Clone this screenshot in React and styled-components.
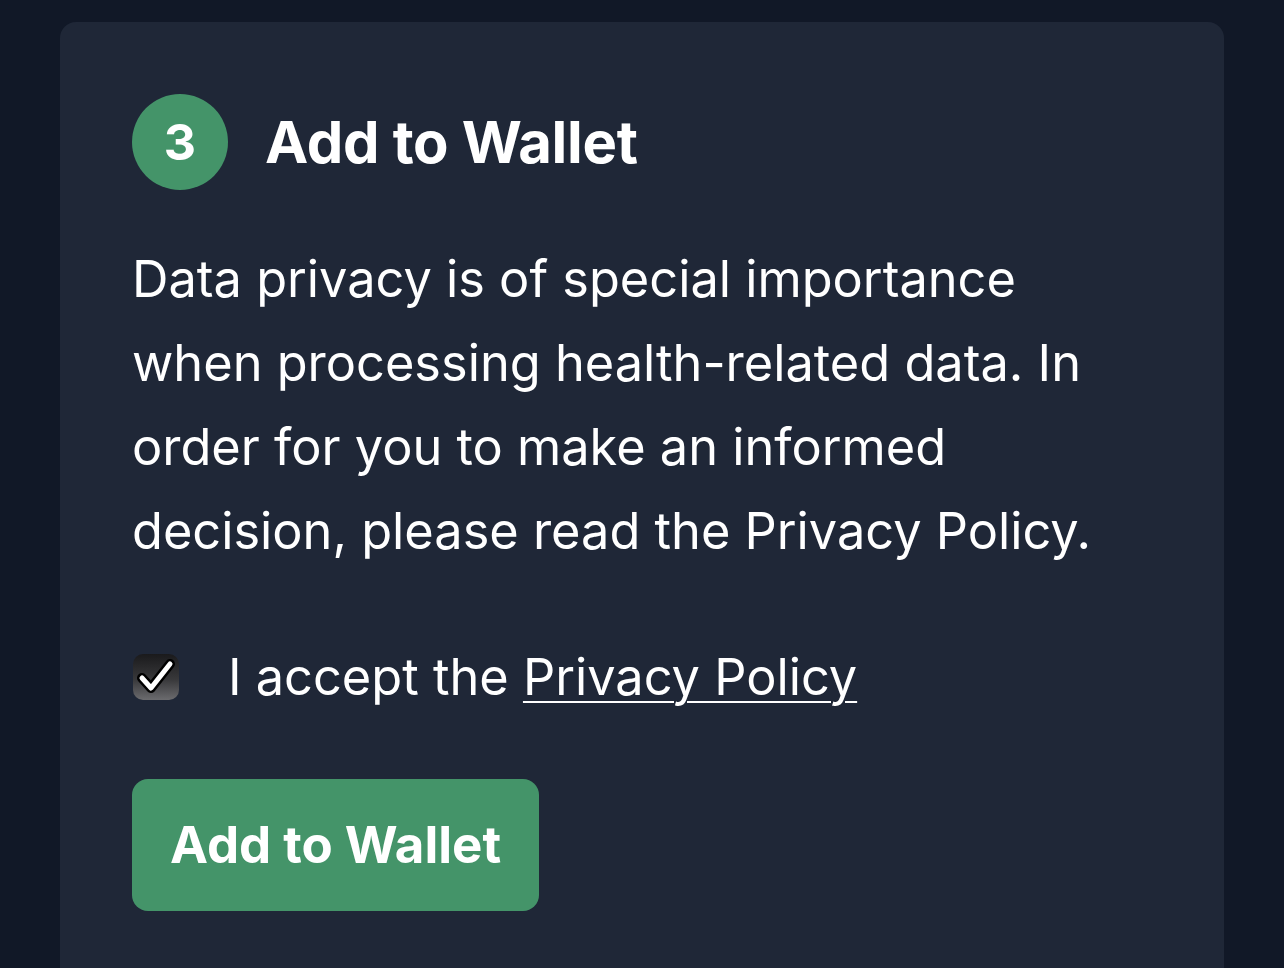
import React, { useState } from 'react';
import styled, { createGlobalStyle } from 'styled-components';

const GlobalStyle = createGlobalStyle`
  html, body {
    margin: 0;
    padding: 0;
    background-color: #111827;
    font-family: Inter, "Noto Sans", "Liberation Sans", sans-serif;
    color: #ffffff;
  }
`;

const Page = styled.div`
  min-height: 968px;
  padding: 22px 60px 0 60px;
  box-sizing: border-box;
  overflow: hidden;
`;

const Card = styled.section`
  background-color: #1f2737;
  border-radius: 16px;
  padding: 72px 72px 80px 72px;
  min-height: 1000px;
  box-sizing: border-box;
`;

const Header = styled.div`
  display: flex;
  align-items: center;
  gap: 37px;
`;

const StepCircle = styled.div`
  width: 96px;
  height: 96px;
  border-radius: 50%;
  background-color: #449469;
  display: flex;
  align-items: center;
  justify-content: center;
  font-size: 50px;
  font-weight: 700;
  flex-shrink: 0;
`;

const Title = styled.h2`
  margin: 0;
  font-size: 58px;
  font-weight: 700;
  letter-spacing: -0.3px;
`;

const Text = styled.p`
  margin: 47px 0 0 0;
  max-width: 1090px;
  font-size: 50.5px;
  line-height: 84px;
`;

const CheckRow = styled.label`
  display: flex;
  align-items: center;
  gap: 49px;
  margin-top: 62px;
  font-size: 50.5px;
  line-height: 84px;
  cursor: pointer;
`;

const Box = styled.span`
  width: 46px;
  height: 46px;
  border-radius: 10px;
  background: linear-gradient(180deg, #1a1a1c 0%, #38383a 55%, #6b6b6e 100%);
  display: flex;
  align-items: center;
  justify-content: center;
  flex-shrink: 0;
  margin-left: 1px;
`;

const Link = styled.a`
  color: #ffffff;
  text-decoration: underline;
  text-underline-offset: 6px;
  text-decoration-thickness: 2px;
`;

const Button = styled.button`
  margin-top: 60px;
  padding: 24px 38px;
  font-family: inherit;
  font-size: 51px;
  line-height: 84px;
  font-weight: 700;
  color: #ffffff;
  background-color: #449469;
  border: none;
  border-radius: 16px;
  cursor: pointer;
`;

function App() {
  const [accepted, setAccepted] = useState(true);

  return (
    <Page>
      <GlobalStyle />
      <Card>
        <Header>
          <StepCircle>3</StepCircle>
          <Title>Add to Wallet</Title>
        </Header>
        <Text>
          Data privacy is of special importance when processing health-related data. In order for you to make an
          informed decision, please read the Privacy Policy.
        </Text>
        <CheckRow onClick={() => setAccepted(!accepted)}>
          <Box>
            {accepted && (
              <svg width="40" height="36" viewBox="0 0 40 36">
                <path d="M6 19 L15 29 L34 5" fill="none" stroke="#000" strokeWidth="10" strokeLinecap="round" strokeLinejoin="round" />
                <path d="M6 19 L15 29 L34 5" fill="none" stroke="#fff" strokeWidth="5" strokeLinecap="round" strokeLinejoin="round" />
              </svg>
            )}
          </Box>
          <span>
            I accept the <Link href="#">Privacy Policy</Link>
          </span>
        </CheckRow>
        <Button>Add to Wallet</Button>
      </Card>
    </Page>
  );
}

export default App;
